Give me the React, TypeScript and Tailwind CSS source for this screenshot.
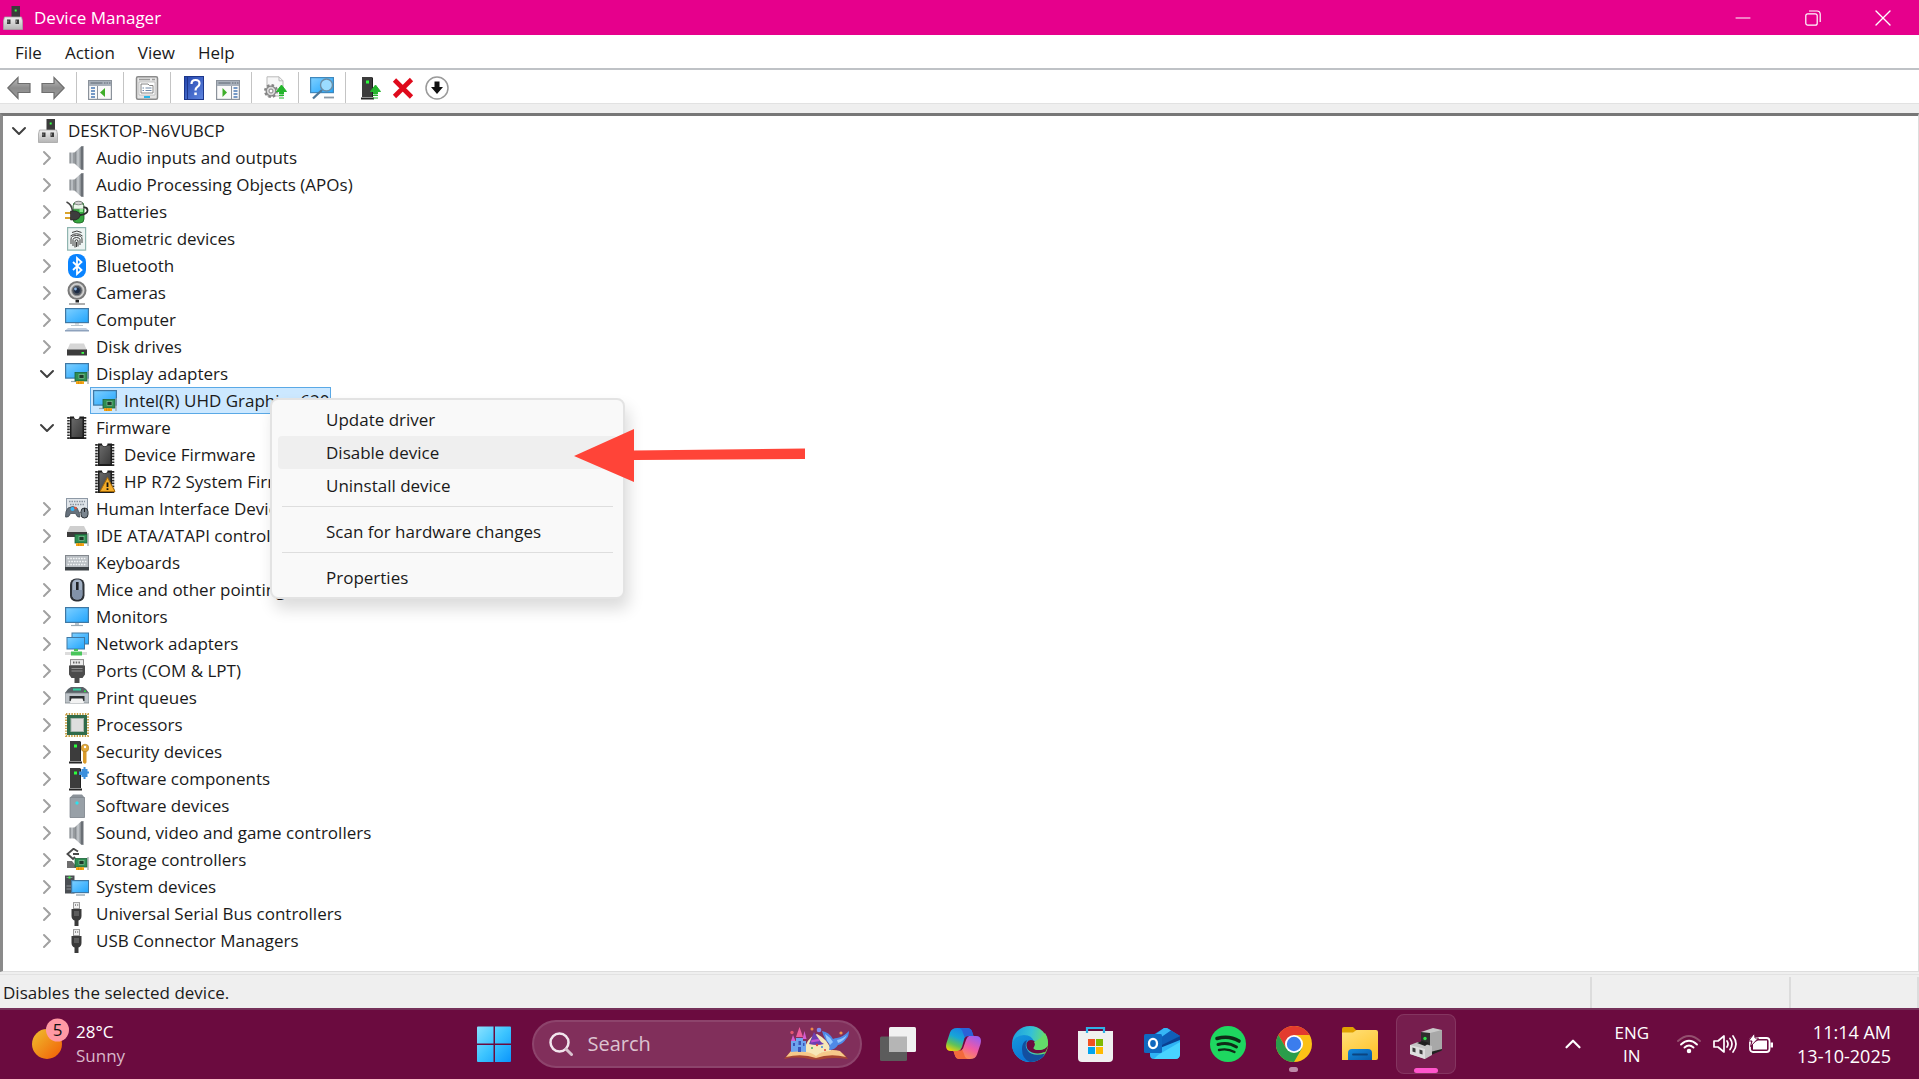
import type { ReactNode } from "react"
import { ChevronDown, ChevronRight, ChevronUp, Minus, X } from "lucide-react"

/* ---------- shared gradients ---------- */

function Gradients() {
  return (
    <svg className="absolute size-0" aria-hidden="true">
      <defs>
        <linearGradient id="screen" x1="0" y1="0" x2="1" y2="1">
          <stop offset="0" stopColor="#7fd0ff" />
          <stop offset="0.5" stopColor="#4fbaff" />
          <stop offset="1" stopColor="#22a5fb" />
        </linearGradient>
        <linearGradient id="steel" x1="0" y1="0" x2="1" y2="0">
          <stop offset="0" stopColor="#6f7479" />
          <stop offset="0.5" stopColor="#c9cdd1" />
          <stop offset="1" stopColor="#777c81" />
        </linearGradient>
        <linearGradient id="silver" x1="0" y1="0" x2="0" y2="1">
          <stop offset="0" stopColor="#f0f0f0" />
          <stop offset="1" stopColor="#b4b4b4" />
        </linearGradient>
        <linearGradient id="charcoal" x1="0" y1="0" x2="1" y2="1">
          <stop offset="0" stopColor="#6a6a6a" />
          <stop offset="1" stopColor="#3a3a3a" />
        </linearGradient>
        <linearGradient id="arrowGray" x1="0" y1="0" x2="0" y2="1">
          <stop offset="0" stopColor="#bdbdbd" />
          <stop offset="0.5" stopColor="#8c8c8c" />
          <stop offset="1" stopColor="#9a9a9a" />
        </linearGradient>
        <linearGradient id="helpBlue" x1="0" y1="0" x2="1" y2="1">
          <stop offset="0" stopColor="#2345ad" />
          <stop offset="1" stopColor="#5f86e0" />
        </linearGradient>
        <linearGradient id="sun" x1="0" y1="0" x2="1" y2="1">
          <stop offset="0" stopColor="#efc02f" />
          <stop offset="1" stopColor="#f25c05" />
        </linearGradient>
        <linearGradient id="copilotA" x1="0.6" y1="0" x2="0.1" y2="1">
          <stop offset="0" stopColor="#1a7fe8" />
          <stop offset="0.4" stopColor="#17a5d8" />
          <stop offset="0.7" stopColor="#5fc25a" />
          <stop offset="1" stopColor="#ffd400" />
        </linearGradient>
        <linearGradient id="copilotB" x1="0.8" y1="0" x2="0.2" y2="1">
          <stop offset="0" stopColor="#9a5cf0" />
          <stop offset="0.45" stopColor="#ef5aa5" />
          <stop offset="1" stopColor="#ffa13d" />
        </linearGradient>
        <linearGradient id="edgeTop" x1="0" y1="0.3" x2="1" y2="0.5">
          <stop offset="0" stopColor="#1d9fe0" />
          <stop offset="0.5" stopColor="#35c1d6" />
          <stop offset="1" stopColor="#74e553" />
        </linearGradient>
        <linearGradient id="edgeLeft" x1="0" y1="0" x2="0.6" y2="1">
          <stop offset="0" stopColor="#1598dc" />
          <stop offset="1" stopColor="#0a6fd6" />
        </linearGradient>
        <linearGradient id="folder" x1="0" y1="0" x2="0.6" y2="1">
          <stop offset="0" stopColor="#ffe07a" />
          <stop offset="1" stopColor="#ffc52e" />
        </linearGradient>
        <linearGradient id="folderBase" x1="0" y1="0" x2="1" y2="1">
          <stop offset="0" stopColor="#1489dd" />
          <stop offset="1" stopColor="#0a5aa8" />
        </linearGradient>
        <linearGradient id="winBlue" x1="0" y1="0" x2="1" y2="1">
          <stop offset="0" stopColor="#8ae2ff" />
          <stop offset="0.5" stopColor="#3cc4ff" />
          <stop offset="1" stopColor="#0b95fb" />
        </linearGradient>
      </defs>
    </svg>
  )
}

function Icon({ children, className = "size-6" }: { children: ReactNode; className?: string }) {
  return (
    <svg viewBox="0 0 24 24" className={`shrink-0 ${className}`} aria-hidden="true">
      {children}
    </svg>
  )
}

/* ---------- device icons, all on a 24 grid ---------- */

const card = (
  <g>
    <rect x="10" y="10.5" width="12" height="8.5" fill="#2f8d52" stroke="#1d6338" strokeWidth="0.8" />
    <rect x="14" y="12.5" width="5" height="4" fill="#1d3a2a" stroke="#8fd3a5" strokeWidth="0.6" />
    <rect x="11" y="19.2" width="8" height="2.8" fill="#f5a312" />
    <path d="M13.5 19.2v2.8M16 19.2v2.8" stroke="#c97a00" strokeWidth="0.6" />
    <path d="M23 9v13" stroke="#9aa0a4" strokeWidth="1.2" />
  </g>
)

const tower = (
  <g>
    <path d="M5 1h10v20H5z" fill="#3c3c3c" />
    <path d="M15 1l1 1v19h-1z" fill="#1f1f1f" />
    <rect x="9" y="4.5" width="3" height="3" fill="#2bff3c" />
    <path d="M4 21.5h13v2H4z" fill="#262626" />
  </g>
)

const chip = (
  <g>
    <path d="M3.5 1v22M20 1v22" stroke="#2a2a2a" strokeWidth="2.6" strokeDasharray="1.7 1.2" />
    <path d="M5 .5h4a2.5 2.5 0 0 0 5.5 0H19V23H5z" fill="#1c1c1c" />
    <path d="M6.5 2.5h2.5a3.5 3.5 0 0 0 5.5 0h3V21h-11z" fill="url(#charcoal)" />
  </g>
)

const speaker = (
  <g>
    <path d="M4.5 6.5h5v11h-5z" fill="url(#steel)" />
    <path d="M9.5 6.5L16.5 0v24l-7-6.5z" fill="url(#steel)" />
    <path d="M16 .5l2.5-.5v24l-2.5-.5z" fill="#6a6f75" />
  </g>
)

const monitor = (
  <g>
    <rect x="0.6" y="2.6" width="22.8" height="14.8" fill="url(#screen)" stroke="#3f78a4" strokeWidth="1.2" />
    <path d="M10 18h4v2h-4z" fill="#b8c4cc" />
    <path d="M6 20.5h12" stroke="#9aa9b4" strokeWidth="1.2" />
  </g>
)

const usb = (
  <g>
    <rect x="8.5" y="0.6" width="6" height="6" fill="#f2f2f2" stroke="#9a9a9a" />
    <path d="M10 3h1M12.2 3h1" stroke="#777" strokeWidth="1.4" />
    <path d="M6.5 7h10v7c0 2.5-1.5 4-3 4.5V24h-4v-5.5c-1.500-.5-3-2-3-4.500z" fill="#3a3a3a" />
    <path d="M9 9h5v5H9z" fill="#5c5c5c" />
  </g>
)

const icons: Record<string, ReactNode> = {
  root: (
    <g>
      <rect x="9.5" y="0" width="8.5" height="11" fill="#3b3b3b" />
      <rect x="12.7" y="3.5" width="2" height="2" fill="#35ff45" />
      <path d="M2.500 11h17l1 4v8.500h-19V15z" fill="url(#silver)" stroke="#a5a5a5" strokeWidth="0.8" />
      <path d="M5 13.500h3.500V18H5zM13.500 13.500H17V18h-3.500z" fill="#3a3a3a" />
      <path d="M5.500 14.500h1v2h-1zM14 14.500h1v2h-1z" fill="#8d8d8d" />
    </g>
  ),
  speaker,
  battery: (
    <g>
      <rect x="8" y="2" width="11" height="21" rx="4" fill="#35a83f" stroke="#1e5f24" strokeWidth="0.8" />
      <path d="M8.500 5a5.500 3 0 0 1 10 0v4h-10z" fill="#e9f7e9" stroke="#7d8c7d" strokeWidth="0.7" />
      <ellipse cx="13.5" cy="3" rx="4" ry="1.8" fill="#cfcfcf" stroke="#666" strokeWidth="0.7" />
      <path d="M14.500 9h3.500v3h-3.500z" fill="#8be88f" />
      <path d="M1.500 2q5 2 6 9" fill="none" stroke="#444" strokeWidth="1.6" />
      <path d="M0 13h6M0 18h6" stroke="#d9a32c" strokeWidth="1.8" />
      <path d="M5.500 11h5q4 1 5 4-1 4-5 5h-5z" fill="#3d3d3d" stroke="#1c1c1c" strokeWidth="0.6" />
      <path d="M15 15q8-1 7.500-5-.5-3-4-2.500" fill="none" stroke="#2d2d2d" strokeWidth="1.8" />
    </g>
  ),
  biometric: (
    <g>
      <rect x="2.6" y="0.6" width="18" height="22.5" fill="#edf4f3" stroke="#8fb5b0" strokeWidth="1.2" />
      <g fill="none" stroke="#3d3d3d" strokeWidth="1">
        <path d="M7 5.500q5-3 9.500 0" />
        <path d="M5.500 9q6-4.500 12 0" />
        <path d="M6 17V12q0-3.500 5.500-3.500T17 12v4" />
        <path d="M8 19v-6.500q.5-2 3.500-2t3.500 2V18" />
        <path d="M10 20.500V13.500q1.500-1.500 3 0v6" />
        <path d="M11.500 15v5" />
      </g>
    </g>
  ),
  bluetooth: (
    <g>
      <rect x="3" y="0" width="18" height="24" rx="8" fill="#0a84ff" />
      <path d="M8 8l8.500 8-4.500 4V4l4.500 4L8 16" fill="none" stroke="#fff" strokeWidth="1.8" />
    </g>
  ),
  camera: (
    <g>
      <circle cx="12" cy="9.5" r="8.5" fill="#cfcfcf" stroke="#7a7a7a" strokeWidth="2" />
      <circle cx="12" cy="9.5" r="5.2" fill="#4a515c" stroke="#8f8f8f" />
      <circle cx="12" cy="9.5" r="2.8" fill="#1c2b44" />
      <circle cx="10.5" cy="8" r="1.4" fill="#8db6e6" />
      <path d="M10.500 19h3.500v2.500h-3.500z" fill="#222" />
      <path d="M4 23h16" stroke="#8c8c8c" strokeWidth="1.4" />
    </g>
  ),
  computer: (
    <g>
      <rect x="0.6" y="0.6" width="22.8" height="14" fill="url(#screen)" stroke="#3f78a4" strokeWidth="1.2" />
      <path d="M10 15h4v1.500h-4zM6 17h12v1H6z" fill="#b8c4cc" />
      <path d="M3 20h18l3 2.500H0z" fill="#c3cfdd" />
      <path d="M0 22h24v1.500H0z" fill="#8ea2bd" />
    </g>
  ),
  disk: (
    <g>
      <path d="M5 8.500h14l3 7H2z" fill="#d6d6d6" />
      <path d="M2 14.500h20v6H2z" fill="#3c3c3c" />
      <path d="M2 14.500h20" stroke="#8c8c8c" />
      <rect x="16.5" y="17" width="2.5" height="1.8" fill="#3dff4c" />
    </g>
  ),
  display: (
    <g>
      <rect x="0.6" y="1.6" width="22.8" height="14.5" fill="url(#screen)" stroke="#3f78a4" strokeWidth="1.2" />
      <path d="M6 19.500h6" stroke="#9aa9b4" strokeWidth="1.2" />
      {card}
    </g>
  ),
  chip,
  chipWarning: (
    <g>
      {chip}
      <path d="M14.500 7.500l7.500 14h-15z" fill="#f4ad2b" stroke="#a86a05" strokeWidth="1" strokeLinejoin="round" />
      <path d="M14.500 12.500v4.500M14.500 18.300v1.700" stroke="#111" strokeWidth="1.8" />
    </g>
  ),
  hid: (
    <g>
      <rect x="1.5" y="1.5" width="21" height="14" fill="#dfe4e9" stroke="#8e99a6" />
      <path d="M4 4.500h16M5 7.500h14" stroke="#8b95a0" strokeWidth="1.5" strokeDasharray="1.5 1" />
      <path d="M3 11q5-3 9 0 3 5 3 9-3 1-4.500-3.500h-5Q4 21 .5 20 0 14 3 11z" fill="#66717c" stroke="#3e464e" strokeWidth="0.7" />
      <circle cx="7.5" cy="12" r="2" fill="#3ab6f5" />
      <circle cx="10.5" cy="11" r="1.3" fill="#e3553b" />
      <rect x="16" y="11" width="7" height="10" rx="3.5" fill="#7b858f" stroke="#2e3439" />
      <path d="M19.500 11v4" stroke="#1f2326" />
    </g>
  ),
  ide: (
    <g>
      <path d="M5 2h14l3 6H2z" fill="#cfcfcf" />
      <path d="M2 8h20v5H2z" fill="#3c3c3c" />
      {card}
    </g>
  ),
  keyboard: (
    <g>
      <rect x="0.5" y="4.5" width="23" height="12" fill="#b9bec3" stroke="#83888e" />
      <path d="M2.500 7.500h19M3.500 10.500h18M2.500 13.500h19" stroke="#f3f5f6" strokeWidth="1.6" strokeDasharray="1.7 1" />
      <path d="M0 16h24v3.500H0z" fill="#3d4246" />
    </g>
  ),
  mouse: (
    <g>
      <rect x="5" y="0.5" width="14.5" height="23" rx="6" fill="#2e3238" />
      <rect x="7.2" y="1.5" width="10.2" height="20" rx="4.5" fill="#a3b1c4" />
      <path d="M7.200 12h10.200v5a5.100 4.500 0 0 1-10.200 0z" fill="#8292a9" />
      <rect x="11" y="4" width="2.6" height="8" fill="#1f2226" />
    </g>
  ),
  monitor,
  network: (
    <g>
      <rect x="7" y="1" width="16.5" height="11" fill="url(#screen)" stroke="#3f78a4" />
      <rect x="2" y="5.5" width="17.5" height="11.5" fill="url(#screen)" stroke="#3f78a4" />
      <path d="M9 17h4v2H9z" fill="#47bf57" />
      <path d="M0 20h22v3H0z" fill="#dcdcdc" />
      <path d="M6 19.500h11v4H6z" fill="#49c65b" />
    </g>
  ),
  port: (
    <g>
      <rect x="5.5" y="0.6" width="13" height="6" fill="#ececec" stroke="#8d8d8d" />
      <path d="M8 3.500h8" stroke="#666" strokeWidth="2" strokeDasharray="1.5 1.2" />
      <path d="M4 6.500h16v9l-2.500 3.500h-3V24h-5v-5h-3L4 15.500z" fill="#4c4c4c" />
      <path d="M6.500 9.500h11M6.500 12h11" stroke="#8f8f8f" strokeWidth="1.2" />
    </g>
  ),
  printer: (
    <g>
      <path d="M3 3l3-2h12l3 2 3 4H0z" fill="#5a6268" />
      <path d="M8 2.500h8v2H8z" fill="#32d0a0" />
      <path d="M0 7h24v10H0z" fill="#bcc2c7" stroke="#7d858b" strokeWidth="0.8" />
      <rect x="19" y="4.5" width="2" height="1.5" fill="#33dd44" />
      <path d="M4.500 10h15v5h-15z" fill="#2d3033" />
      <path d="M6.500 12.500h11l1.500 4.500H5z" fill="#f2f2f2" />
    </g>
  ),
  processor: (
    <g>
      <rect x="1" y="1" width="22" height="22" fill="none" stroke="#c59a3c" strokeWidth="1.8" strokeDasharray="1.4 1.3" />
      <rect x="2" y="2" width="20" height="20" fill="#2f6b4b" />
      <rect x="6" y="5.5" width="12.5" height="13" fill="#dedede" stroke="#a8b5ad" />
    </g>
  ),
  security: (
    <g>
      {tower}
      <path d="M18 11h3.500v11.500l-1.500 1.500-2-1.500z" fill="#d99a2b" />
      <circle cx="20" cy="8" r="3.8" fill="#e2a83a" stroke="#a97719" strokeWidth="0.6" />
      <circle cx="20" cy="7" r="1.2" fill="#fff" />
    </g>
  ),
  component: (
    <g>
      {tower}
      <path d="M14 4.500h2.500V2h2V0h2v2h2v2.500H24v2h-1.500V10h-2v2h-2v-2h-2V8H14z" fill="#3c8fdc" />
    </g>
  ),
  softDevice: (
    <g>
      <path d="M5 3.500L8 .5h9l2.500 3V23.500H5z" fill="#8b9299" />
      <path d="M5 3.500h14.500v20H5z" fill="#98a0a7" stroke="#7b8389" strokeWidth="0.7" />
      <path d="M12 7l2 2-2 2-2-2z" fill="#2be3ef" />
    </g>
  ),
  storage: (
    <g>
      <path d="M13 3.500L8.500 .8 2.500 6 8 11l2-2M8 6h6" fill="none" stroke="#4a4a4a" strokeWidth="1.9" />
      <path d="M2 13h5l4 5v2H2z" fill="#6e6e6e" />
      {card}
    </g>
  ),
  system: (
    <g>
      <path d="M0 .5h9.500v18H0z" fill="#4a4e52" />
      <path d="M1.500 2.500h6M1.500 11h6M1.500 14h6" stroke="#8b9095" />
      <rect x="3.5" y="1.5" width="2" height="2" fill="#35ff45" />
      <rect x="6.6" y="5.6" width="17" height="12" fill="url(#screen)" stroke="#3f78a4" strokeWidth="1.2" />
      <path d="M11 20h9" stroke="#9aa9b4" strokeWidth="1.4" />
    </g>
  ),
  usb,
}

/* ---------- tree ---------- */

type Device = { name: string; icon: string; selected?: boolean; children?: Device[] }

const categories: Device[] = [
  { name: "Audio inputs and outputs", icon: "speaker" },
  { name: "Audio Processing Objects (APOs)", icon: "speaker" },
  { name: "Batteries", icon: "battery" },
  { name: "Biometric devices", icon: "biometric" },
  { name: "Bluetooth", icon: "bluetooth" },
  { name: "Cameras", icon: "camera" },
  { name: "Computer", icon: "computer" },
  { name: "Disk drives", icon: "disk" },
  {
    name: "Display adapters",
    icon: "display",
    children: [{ name: "Intel(R) UHD Graphics 620", icon: "display", selected: true }],
  },
  {
    name: "Firmware",
    icon: "chip",
    children: [
      { name: "Device Firmware", icon: "chip" },
      { name: "HP R72 System Firmware", icon: "chipWarning" },
    ],
  },
  { name: "Human Interface Devices", icon: "hid" },
  { name: "IDE ATA/ATAPI controllers", icon: "ide" },
  { name: "Keyboards", icon: "keyboard" },
  { name: "Mice and other pointing devices", icon: "mouse" },
  { name: "Monitors", icon: "monitor" },
  { name: "Network adapters", icon: "network" },
  { name: "Ports (COM & LPT)", icon: "port" },
  { name: "Print queues", icon: "printer" },
  { name: "Processors", icon: "processor" },
  { name: "Security devices", icon: "security" },
  { name: "Software components", icon: "component" },
  { name: "Software devices", icon: "softDevice" },
  { name: "Sound, video and game controllers", icon: "speaker" },
  { name: "Storage controllers", icon: "storage" },
  { name: "System devices", icon: "system" },
  { name: "Universal Serial Bus controllers", icon: "usb" },
  { name: "USB Connector Managers", icon: "usb" },
]

function TreeNode({ device, level = 0 }: { device: Device; level?: number }) {
  const open = !!device.children
  return (
    <li>
      <div className="flex h-[27px] items-center">
        {level < 2 ? (
          <button className="flex w-[31px] shrink-0 justify-center" aria-label={open ? "Collapse" : "Expand"}>
            {open ? (
              <ChevronDown size={24} strokeWidth={2} className="text-neutral-700" />
            ) : (
              <ChevronRight size={24} strokeWidth={2} className="text-neutral-400" />
            )}
          </button>
        ) : (
          <span className="w-[31px] shrink-0" />
        )}
        <div
          className={`flex h-[27px] items-center gap-[7px] border pr-px pl-0.5 whitespace-nowrap ${
            device.selected ? "border-[#5aa9e6] bg-[#cce8ff]" : "border-transparent"
          }`}
        >
          <Icon>{icons[device.icon]}</Icon>
          <span>{device.name}</span>
        </div>
      </div>
      {device.children && (
        <ul className="pl-7">
          {device.children.map((child) => (
            <TreeNode key={child.name} device={child} level={level + 1} />
          ))}
        </ul>
      )}
    </li>
  )
}

/* ---------- context menu ---------- */

function MenuItem({ label, active }: { label: string; active?: boolean }) {
  return (
    <button className={`flex h-[33px] w-full items-center rounded pl-12 ${active ? "bg-[#efefef]" : ""}`}>{label}</button>
  )
}

function ContextMenu() {
  return (
    <div className="absolute top-[282px] left-[267px] w-[355px] rounded-lg border-2 border-[#e3e3e3] bg-[#f9f9f9] px-1.5 py-[3px] shadow-[4px_10px_16px_rgba(0,0,0,0.14)]">
      <MenuItem label="Update driver" />
      <MenuItem label="Disable device" active />
      <MenuItem label="Uninstall device" />
      <hr className="mx-1 mt-1 mb-2 border-[#dedede]" />
      <MenuItem label="Scan for hardware changes" />
      <hr className="mx-1 mt-1 mb-2 border-[#dedede]" />
      <MenuItem label="Properties" />
    </div>
  )
}

/* ---------- toolbar ---------- */

const upArrow = <path d="M18.500 9l5 6.500h-3V18h-4v-2.500h-3zM16 19.500h5M16 22h5" fill="#24b52c" stroke="#24b52c" strokeWidth="1" />

const panelWindow = (
  <g>
    <rect x="0.6" y="4.6" width="22.8" height="18.8" fill="#fafafa" stroke="#8b929b" strokeWidth="1.2" />
    <path d="M1 5h22v5H1z" fill="#a9b1bb" />
    <path d="M2.500 7h12M16 7h1.500M18.500 7H20M21 7h1.500" stroke="#5f6874" />
  </g>
)

function Tool({ label, children }: { label: string; children: ReactNode }) {
  return (
    <button className="flex w-[34px] justify-center" title={label}>
      <Icon>{children}</Icon>
    </button>
  )
}

function Divider() {
  return <span className="mx-1.5 h-[31px] w-px bg-[#c4c4c4]" />
}

function Toolbar() {
  return (
    <div className="flex h-[34px] shrink-0 items-center border-b border-[#e2e2e2] bg-white pt-0.5 pl-0.5">
      <Tool label="Back">
        <path d="M.8 12L11 1.500V7.500h12v9H11v6z" fill="url(#arrowGray)" stroke="#6e6e6e" strokeWidth="1.2" />
      </Tool>
      <Tool label="Forward">
        <path d="M23.200 12L13 1.500V7.500H1v9h12v6z" fill="url(#arrowGray)" stroke="#6e6e6e" strokeWidth="1.2" />
      </Tool>
      <Divider />
      <Tool label="Show/Hide Console Tree">
        {panelWindow}
        <path d="M3 12h4M3 15h4M3 18h4M3 21h4" stroke="#4a7ab5" strokeWidth="1.3" />
        <path d="M9.500 10v13" stroke="#8b929b" />
        <path d="M17 12v9L12 16.500z" fill="#3fae2a" />
      </Tool>
      <Divider />
      <Tool label="Properties">
        <rect x="1.5" y="0.8" width="21" height="22.4" rx="1.5" fill="#e4e4e4" stroke="#8b8b8b" strokeWidth="1.5" />
        <path d="M4 3.500h11M17 3.500h3" stroke="#9b9b9b" strokeWidth="1.4" />
        <path d="M4 6h16v13H4z" fill="#fff" stroke="#b5b5b5" strokeWidth="0.8" />
        <path d="M6 8h7l1.500 1.500H18V17H6z" fill="#fff" stroke="#777" strokeWidth="0.9" />
        <path d="M7.500 12h1.500M10.500 12h6M7.500 14.500h1.500M10.500 14.500h6" stroke="#6f87a5" />
        <rect x="9" y="20" width="6" height="2" fill="#25b6ea" />
      </Tool>
      <Divider />
      <Tool label="Help">
        <rect x="2.5" y="0.5" width="19" height="23" fill="url(#helpBlue)" stroke="#1c378c" />
        <path d="M5.500 1v22" stroke="#1c378c" />
        <path d="M9.500 8q0-4 4-4t4 3.500q0 2.300-2.300 3.600-1.700 1-1.700 3.400" fill="none" stroke="#fff" strokeWidth="2.2" />
        <rect x="12.3" y="16.5" width="2.5" height="2.6" fill="#fff" />
      </Tool>
      <Tool label="Show/Hide Action Pane">
        {panelWindow}
        <path d="M17.500 12h4M17.500 15h4M17.500 18h4M17.500 21h4" stroke="#4a7ab5" strokeWidth="1.3" />
        <path d="M15.500 10v13" stroke="#8b929b" />
        <path d="M6.500 12v9l4.500-4.500z" fill="#3fae2a" />
      </Tool>
      <Divider />
      <Tool label="Update driver">
        <path d="M4 .8h12l4 4V20H4z" fill="#f7f7f7" stroke="#b9b9b9" />
        <path d="M16 .8v4h4" fill="none" stroke="#b9b9b9" />
        <circle cx="8" cy="15" r="5.5" fill="#d8d8d8" stroke="#858585" strokeWidth="3" strokeDasharray="2.3 2" />
        <circle cx="8" cy="15" r="4.8" fill="#d8d8d8" stroke="#858585" strokeWidth="1.2" />
        <circle cx="8" cy="15" r="2" fill="#fff" stroke="#858585" />
        {upArrow}
      </Tool>
      <Divider />
      <Tool label="Scan for hardware changes">
        <rect x="0.6" y="1.6" width="22.8" height="15" fill="url(#screen)" stroke="#3f88bd" strokeWidth="1.2" />
        <path d="M14 21.500h10" stroke="#8d9aa5" strokeWidth="1.8" />
        <path d="M12 14l-9 8.500" stroke="#4f7898" strokeWidth="2.4" />
        <circle cx="16.5" cy="9" r="6" fill="#9bdcff" stroke="#6c8ea6" strokeWidth="1.4" />
      </Tool>
      <Divider />
      <Tool label="Enable device">
        {tower}
        {upArrow}
      </Tool>
      <Tool label="Uninstall device">
        <path d="M3.500 4l17 17M20.500 3.500l-17 17" stroke="#df0a1c" strokeWidth="4.6" />
      </Tool>
      <Tool label="Disable device">
        <circle cx="12" cy="12" r="11" fill="#fff" stroke="#9a9a9a" strokeWidth="1.5" />
        <path d="M9.500 5.500h5V11H18l-6 7-6-7h3.500z" fill="#111" />
      </Tool>
    </div>
  )
}

/* ---------- taskbar ---------- */

function TaskButton({ label, children, running, active }: { label: string; children: ReactNode; running?: boolean; active?: boolean }) {
  return (
    <button
      title={label}
      className={`relative mx-[3px] flex size-[60px] items-center justify-center rounded-lg ${
        active ? "border border-white/10 bg-white/8" : ""
      }`}
    >
      {children}
      {running && <span className="absolute bottom-0.5 h-[5px] w-[9px] rounded-full bg-[#bd8aa8]" />}
      {active && <span className="absolute bottom-0 h-[5px] w-6 rounded-full bg-[#ff55cc]" />}
    </button>
  )
}

function StorybookArt() {
  return (
    <svg viewBox="0 0 66 33" className="h-[33px] w-[66px] shrink-0" aria-hidden="true">
      <path d="M0 32L5 26q14-4 27 2 14-6 27-2l5 6q-14-2-28 .5h-8Q14 29 0 32z" fill="#a84632" />
      <path d="M2 30L7 24q14-3 25 4 12-7 24-4l6 6q-16-4-30 1Q18 26 2 30z" fill="#f6c98a" />
      <path d="M20 25q2-14 13-18 12 6 14 17-9 0-15 5-5-4-12-4z" fill="#f7e7b8" />
      <path d="M7 25V14h5v-3h7v3h3v11q-8-1-15 0z" fill="#6ea4ee" />
      <path d="M12 10l3.500-10L19 10z" fill="#ee5e9c" />
      <path d="M7 14l2-6 2.500 6zM18.500 12L20.500 4l2 8z" fill="#d65cd0" />
      <path d="M9 16h2v3H9zM14.500 14H17v4h-2.500zM19 16h1.500v3H19zM14 20h3v5h-3z" fill="#3b54b8" />
      <path d="M25 17L30 5l7 10 3 2q-7 2-15 0z" fill="#6c3fb0" />
      <path d="M27.500 13l7-1 1.500 2-9 1.500z" fill="#c04fd0" />
      <path d="M38 4q7 1 11 8 2-1 4-1 6-1 12-7 0 5-3 8-3 5-8 6-3 5-9 5 1-4 0-6-5-5-7-13z" fill="#4f8ae8" />
      <path d="M41 7q5 3 8 8l-3 3q-4-5-5-11zM53 13q6-1 10-5-3 6-9 8z" fill="#96c9ff" />
      <circle cx="8" cy="5.500" r="1.7" fill="#e5556f" />
      <circle cx="28" cy="2" r="1.5" fill="#ef8a4a" />
      <circle cx="35" cy="3" r="2.3" fill="#7c8bf0" />
      <circle cx="57" cy="6" r="1.6" fill="#f0954f" />
      <circle cx="33" cy="18" r="1.2" fill="#e0413e" />
      <circle cx="28" cy="21" r="1" fill="#42ae60" />
      <circle cx="38" cy="20" r="1" fill="#3e88e0" />
      <circle cx="41" cy="23" r="1" fill="#e0413e" />
    </svg>
  )
}

function Taskbar() {
  return (
    <footer className="grid h-[71px] shrink-0 grid-cols-[1fr_auto_1fr] items-center border-t-2 border-[#75315a] bg-[#6b0b3f] pb-0.5 text-white">
      <button className="flex items-center gap-1.5 justify-self-start pl-[30px] text-left">
        <svg viewBox="0 0 40 54" className="h-[54px] w-10" aria-hidden="true">
          <circle cx="17" cy="27" r="15" fill="url(#sun)" />
          <circle cx="27.5" cy="13" r="11.5" fill="#ff99a4" />
          <text x="27.5" y="19" textAnchor="middle" fontSize="17" fill="#111">5</text>
        </svg>
        <span className="leading-6">
          <span className="block">28°C</span>
          <span className="block text-[#d9b8c9]">Sunny</span>
        </span>
      </button>

      <div className="flex items-center">
        <TaskButton label="Start">
          <svg viewBox="0 0 34 36" className="h-9 w-[34px]">
            <path d="M1 .5h15.500v17H0V1.500q0-1 1-1zM18 .5h15q1 0 1 1v16H18zM0 19h16.500v17H1q-1 0-1-1zM18 19h16v16q0 1-1 1H18z" fill="url(#winBlue)" />
          </svg>
        </TaskButton>
        <label className="mr-[3px] ml-[5px] flex h-12 w-[330px] items-center rounded-full border-2 border-white/10 bg-white/15 pr-2.5 pl-[15px]">
          <svg viewBox="0 0 24 24" className="size-6 shrink-0">
            <circle cx="10.5" cy="10.5" r="9" fill="none" stroke="#f2e6ed" strokeWidth="2.5" />
            <path d="M17 17l5.500 5.500" stroke="#d9c3cf" strokeWidth="3" strokeLinecap="round" />
          </svg>
          <input placeholder="Search" aria-label="Search" className="ml-[15px] min-w-0 flex-1 bg-transparent text-xl text-white outline-none placeholder:text-[#dcc3d0]" />
          <StorybookArt />
        </label>
        <TaskButton label="Task View">
          <svg viewBox="0 0 36 34" className="h-[34px] w-9">
            <rect x="0" y="9.5" width="27" height="24.5" rx="1.5" fill="#5c5c5c" />
            <rect x="9" y="0" width="27" height="25" rx="1.5" fill="#f1f1f1" />
            <rect x="9" y="9.5" width="18" height="15.5" fill="#b5b5b5" />
          </svg>
        </TaskButton>
        <TaskButton label="Copilot">
          <svg viewBox="0 0 35 31" className="h-[31px] w-[35px]">
            <path d="M11 0H21q4 0 5 3.500L27.500 8H24q-3.500 0-5 4l-3 8.500Q15 23 12 23H5Q-1.500 23 .5 15L4 4.500Q5.500 0 11 0z" fill="url(#copilotA)" />
            <path d="M21 0q4 0 5 3.500L27.500 8H24q-3 0-4.500 3L17 5q-1-5-5-5z" fill="#2a62d8" />
            <path d="M24 31H14q-4 0-5-3.500L7.500 23H11q3.500 0 5-4l3-8.500Q20 8 23 8h7q6.500 0 4.500 8L31 26.500Q29.500 31 24 31z" fill="url(#copilotB)" />
            <path d="M14 31q-4 0-5-3.500L7.500 23H11q3 0 4.500-3l2.500 6q1 5 5 5z" fill="#f26a3d" />
            <path d="M18.500 10q1.500-2 4.500-2-2 1-3 4l-3 8.500Q16 22.500 12.500 23q2.500-1 3.500-4z" fill="#6b0b3f" />
          </svg>
        </TaskButton>
        <TaskButton label="Microsoft Edge">
          <svg viewBox="0 0 36 36" className="size-9">
            <circle cx="18" cy="18" r="18" fill="url(#edgeTop)" />
            <path d="M0 18Q3 9 12 9q8 0 10 7-5-3-8 1-3 6 2 11 7 6 17 1Q27 36 18 36A18 18 0 0 1 0 18z" fill="url(#edgeLeft)" />
            <path d="M10 23q0-7 5-9-3 6 1 11 5 6 17 2.500Q28 36 18 36 10 33 10 23z" fill="#134f9f" />
            <path d="M22.500 15Q17 12 14.500 17q-1 7 5.500 9.500 7 2 12.500-.5.500 2 3.500-6-4 4-10 4-4-.3-4.500-2Q24 19 22.500 15z" fill="#6b0b3f" />
            <path d="M22 16q2 3-.5 6 1 2.500 6.500 2 8-1 8-8 0-5-3-9-3 5-11 9z" fill="#63dc6a" />
          </svg>
        </TaskButton>
        <TaskButton label="Microsoft Store">
          <svg viewBox="0 0 35 36" className="h-9 w-[35px]">
            <path d="M0 5h35v27q0 4-4 4H4q-4 0-4-4z" fill="#f0f0f0" />
            <path d="M9 7V2h17v5" fill="none" stroke="#2fb1e6" strokeWidth="2.2" />
            <path d="M10 13h7v7h-7z" fill="#f25022" />
            <path d="M18 13h7v7h-7z" fill="#7fba00" />
            <path d="M10 21h7v7h-7z" fill="#00a4ef" />
            <path d="M18 21h7v7h-7z" fill="#ffb900" />
          </svg>
        </TaskButton>
        <TaskButton label="Outlook">
          <svg viewBox="0 0 36 31" className="h-[31px] w-9">
            <path d="M9 7L20 0h3l13 8v6L12 27l-6-3z" fill="#1380d8" />
            <path d="M12 6L20 0h3l4 2.500L13 12z" fill="#36b6f5" />
            <path d="M27 2.500l9 5.500L18 19l-6-6z" fill="#0f5fb8" />
            <path d="M36 8v6L16 24l-4-4z" fill="#0a3f91" />
            <path d="M6 24l30-12v14q0 5-5 5H10q-4 0-4-4z" fill="#2fb3f5" />
            <path d="M14 27l22-13v12q0 5-5 5H10z" fill="#48d3ff" />
            <rect x="0" y="6" width="18" height="19" rx="1.5" fill="#1068bf" />
            <ellipse cx="9" cy="15.5" rx="4" ry="4.6" fill="none" stroke="#fff" strokeWidth="2.3" />
          </svg>
        </TaskButton>
        <TaskButton label="Spotify">
          <svg viewBox="0 0 36 36" className="size-9">
            <circle cx="18" cy="18" r="18" fill="#1ed760" />
            <g fill="none" stroke="#0f2a17" strokeLinecap="round">
              <path d="M7 12.500q12-3.500 22 2.500" strokeWidth="3.6" />
              <path d="M8 18.500q10-3 18.500 2.500" strokeWidth="3" />
              <path d="M9 24q8.500-2 15.500 2" strokeWidth="2.4" />
            </g>
          </svg>
        </TaskButton>
        <TaskButton label="Google Chrome" running>
          <svg viewBox="0 0 36 36" className="size-9">
            <circle cx="18" cy="18" r="18" fill="#fbc116" />
            <path d="M2.400 9A18 18 0 0 1 33.600 9H18L10.200 22.500z" fill="#e33b2e" />
            <path d="M2.400 9A18 18 0 0 0 18 36l7.800-13.500H10.200z" fill="#2a9d4b" />
            <circle cx="18" cy="18" r="9" fill="#fff" />
            <circle cx="18" cy="18" r="7.2" fill="#3b7ded" />
          </svg>
        </TaskButton>
        <TaskButton label="File Explorer">
          <svg viewBox="0 0 36 33" className="h-[33px] w-9">
            <path d="M0 2q0-2 2-2h9l4 4v6H0z" fill="#e0a100" />
            <path d="M0 5.500h11L14.500 3H34q2 0 2 2v26q0 2-2 2H0z" fill="url(#folder)" />
            <path d="M6 33v-7q0-4 4-4h16q4 0 4 4v7z" fill="url(#folderBase)" />
            <path d="M11 27.500h14" stroke="#0b4480" strokeWidth="1.8" strokeLinecap="round" />
          </svg>
        </TaskButton>
        <TaskButton label="Device Manager" active>
          <svg viewBox="0 0 32 31" className="h-[31px] w-8">
            <path d="M11 4l12-4 9 2v20l-9 3-12-6z" fill="#c9c9c9" />
            <path d="M11 4l9 1v16l-9-3z" fill="#2e2e2e" />
            <path d="M20 5l12-3v20l-12 2z" fill="#a8a8a8" />
            <path d="M20 24l12-3v1.500L21 27z" fill="#222" />
            <circle cx="15" cy="10.5" r="1.7" fill="#2fe04a" />
            <path d="M0 17l8-3 14 4v9l-7 4-15-5z" fill="#c4c4c4" />
            <path d="M0 17l15 4v10L0 26z" fill="#dedede" />
            <path d="M7 15l5-2 7 2-4 3z" fill="#1e1e1e" />
            <path d="M2.500 19.500l3 1v4l-3-1zM9.500 21.500l3 1v4l-3-1z" fill="#3c3c3c" />
          </svg>
        </TaskButton>
      </div>

      <div className="flex items-center justify-self-end pr-7">
        <button aria-label="Show hidden icons" className="mr-7">
          <ChevronUp size={26} strokeWidth={2} />
        </button>
        <button className="mr-7 text-center leading-[23px]">
          <span className="block">ENG</span>
          <span className="block">IN</span>
        </button>
        <button className="mr-6 flex items-center gap-3" aria-label="Network, volume and battery">
          <svg viewBox="0 0 24 20" className="h-5 w-6" fill="none" stroke="#fff" strokeWidth="1.9" strokeLinecap="round">
            <path d="M1 7q11-10 22 0" stroke="#94506f" />
            <path d="M4 10.500q8-7.500 16 0" />
            <path d="M7.500 13.500q4.500-4 9 0" />
            <circle cx="12" cy="17" r="1.3" fill="#fff" />
          </svg>
          <svg viewBox="0 0 24 20" className="h-5 w-6" fill="none" stroke="#fff" strokeWidth="1.7" strokeLinecap="round" strokeLinejoin="round">
            <path d="M1 7h4l6-5v16l-6-5H1z" />
            <path d="M14 7q2 3 0 6M17 4.500q4 5.500 0 11M20 2q6 8 0 16" />
          </svg>
          <svg viewBox="0 0 24 20" className="h-5 w-6">
            <rect x="1" y="4" width="19.5" height="14" rx="3" fill="none" stroke="#fff" strokeWidth="1.8" />
            <path d="M4 9l5-2.500h9V15.500H4z" fill="#fff" />
            <path d="M21.500 8.500h2.500v5h-2.500z" fill="#fff" />
            <path d="M5.500-1L-.5 7H3L1.500 12.500 9.500 4H6z" fill="#fff" stroke="#6b0b3f" strokeWidth="1" />
          </svg>
        </button>
        <button className="text-right text-lg leading-6">
          <span className="block">11:14 AM</span>
          <span className="block">13-10-2025</span>
        </button>
      </div>
    </footer>
  )
}

/* ---------- window ---------- */

export default function App() {
  return (
    <div className="flex h-screen flex-col overflow-hidden bg-[#efefef] font-['Open_Sans','Noto_Sans',sans-serif] text-[17px] text-[#1a1a1a]">
      <Gradients />
      <header className="flex h-[35px] shrink-0 items-center bg-[#e6008c] pr-px pl-0.5 text-white">
        <Icon>{icons.root}</Icon>
        <h1 className="ml-2 flex-1">Device Manager</h1>
        <button className="flex w-[70px] justify-center" aria-label="Minimize">
          <Minus size={24} strokeWidth={1} />
        </button>
        <button className="flex w-[70px] justify-center" aria-label="Restore">
          <svg viewBox="0 0 16 16" className="size-4" fill="none" stroke="#fff" strokeWidth="1.2">
            <rect x="0.8" y="3.8" width="11.4" height="11.4" rx="2" />
            <path d="M4 1h8q3.200 0 3.200 3.200V12" />
          </svg>
        </button>
        <button className="flex w-[70px] justify-center" aria-label="Close">
          <X size={28} strokeWidth={1.2} />
        </button>
      </header>

      <nav className="flex h-[35px] shrink-0 items-center gap-[23px] border-b-2 border-[#bfc2c6] bg-white pt-0.5 pl-[15px]">
        <button>File</button>
        <button>Action</button>
        <button>View</button>
        <button>Help</button>
      </nav>

      <Toolbar />

      <main className="relative mt-[9px] min-h-0 flex-1 border-t-3 border-r border-b border-l-3 border-t-[#777] border-r-[#ddd] border-b-[#ddd] border-l-[#8a8a8a] bg-white">
        <ul className="pt-px">
          <TreeNode device={{ name: "DESKTOP-N6VUBCP", icon: "root", children: categories }} />
        </ul>
        <ContextMenu />
        <svg viewBox="0 0 232 54" className="absolute top-[312px] left-[571px] h-[54px] w-[232px]" aria-hidden="true">
          <path d="M0 28L60 1v21.500l171-2v10.500l-171 1V54z" fill="#ff4438" />
        </svg>
      </main>

      <div className="mt-0.5 flex h-[34px] shrink-0 items-stretch border-t border-[#e2e2e2] pt-0.5" role="status">
        <span className="flex-1 self-center pl-[3px]">Disables the selected device.</span>
        <span className="w-[199px] border-l-2 border-[#dcdcdc]" />
        <span className="w-[130px] border-r-2 border-l-2 border-[#dcdcdc]" />
      </div>

      <Taskbar />
    </div>
  )
}
